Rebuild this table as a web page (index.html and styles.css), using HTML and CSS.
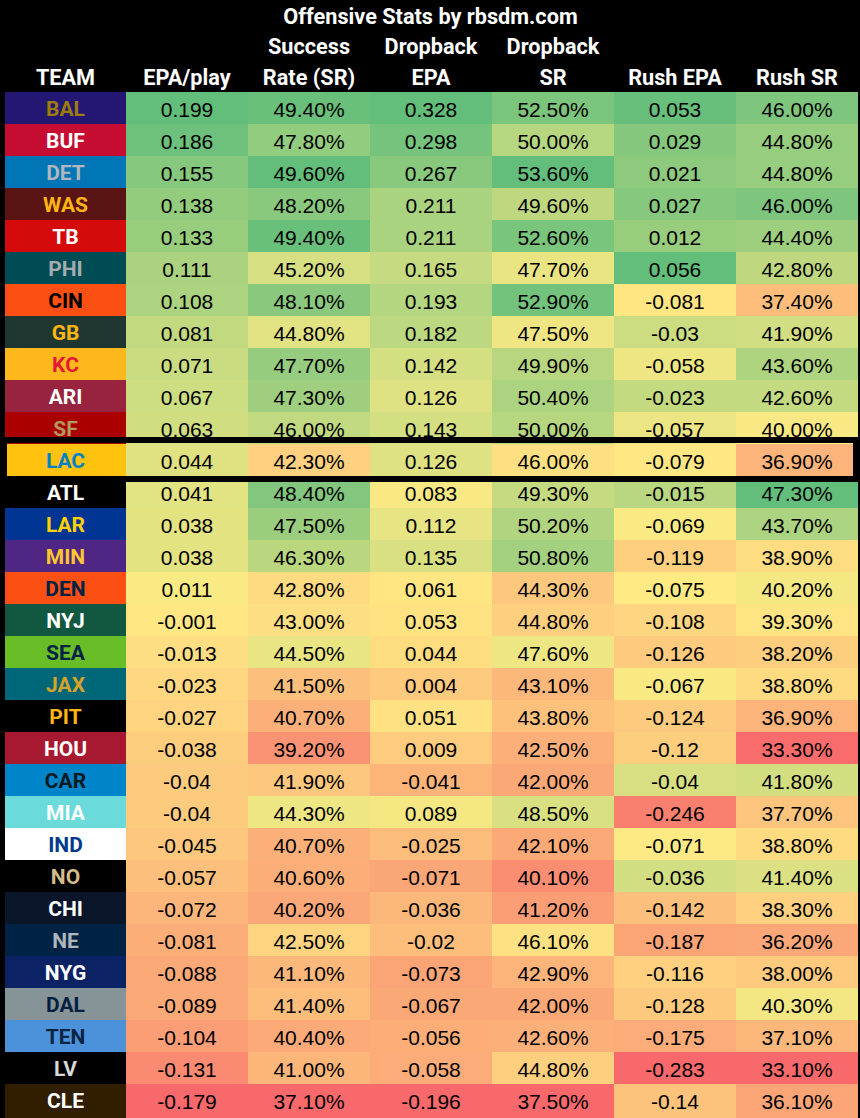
FILE: index.html
```html
<!DOCTYPE html>
<html lang="en">
<head>
<meta charset="utf-8">
<title>Offensive Stats by rbsdm.com</title>
<link rel="stylesheet" href="styles.css">
</head>
<body>
<div class="sheet">
  <header class="head">
    <div class="title">Offensive Stats by rbsdm.com</div>
    <div class="cols">
      <div class="h">TEAM</div>
      <div class="h">EPA/play</div>
      <div class="h">Success<br>Rate (SR)</div>
      <div class="h">Dropback<br>EPA</div>
      <div class="h">Dropback<br>SR</div>
      <div class="h">Rush EPA</div>
      <div class="h">Rush SR</div>
    </div>
  </header>
  <div class="table" id="tbl">
    <div class="row"><div class="team bal">BAL</div><div class="c">0.199</div><div class="c">49.40%</div><div class="c">0.328</div><div class="c">52.50%</div><div class="c">0.053</div><div class="c">46.00%</div></div>
    <div class="row"><div class="team buf">BUF</div><div class="c">0.186</div><div class="c">47.80%</div><div class="c">0.298</div><div class="c">50.00%</div><div class="c">0.029</div><div class="c">44.80%</div></div>
    <div class="row"><div class="team det">DET</div><div class="c">0.155</div><div class="c">49.60%</div><div class="c">0.267</div><div class="c">53.60%</div><div class="c">0.021</div><div class="c">44.80%</div></div>
    <div class="row"><div class="team was">WAS</div><div class="c">0.138</div><div class="c">48.20%</div><div class="c">0.211</div><div class="c">49.60%</div><div class="c">0.027</div><div class="c">46.00%</div></div>
    <div class="row"><div class="team tb">TB</div><div class="c">0.133</div><div class="c">49.40%</div><div class="c">0.211</div><div class="c">52.60%</div><div class="c">0.012</div><div class="c">44.40%</div></div>
    <div class="row"><div class="team phi">PHI</div><div class="c">0.111</div><div class="c">45.20%</div><div class="c">0.165</div><div class="c">47.70%</div><div class="c">0.056</div><div class="c">42.80%</div></div>
    <div class="row"><div class="team cin">CIN</div><div class="c">0.108</div><div class="c">48.10%</div><div class="c">0.193</div><div class="c">52.90%</div><div class="c">-0.081</div><div class="c">37.40%</div></div>
    <div class="row"><div class="team gb">GB</div><div class="c">0.081</div><div class="c">44.80%</div><div class="c">0.182</div><div class="c">47.50%</div><div class="c">-0.03</div><div class="c">41.90%</div></div>
    <div class="row"><div class="team kc">KC</div><div class="c">0.071</div><div class="c">47.70%</div><div class="c">0.142</div><div class="c">49.90%</div><div class="c">-0.058</div><div class="c">43.60%</div></div>
    <div class="row"><div class="team ari">ARI</div><div class="c">0.067</div><div class="c">47.30%</div><div class="c">0.126</div><div class="c">50.40%</div><div class="c">-0.023</div><div class="c">42.60%</div></div>
    <div class="row"><div class="team sf">SF</div><div class="c">0.063</div><div class="c">46.00%</div><div class="c">0.143</div><div class="c">50.00%</div><div class="c">-0.057</div><div class="c">40.00%</div></div>
    <div class="row hl-row"><div class="team lac">LAC</div><div class="c">0.044</div><div class="c">42.30%</div><div class="c">0.126</div><div class="c">46.00%</div><div class="c">-0.079</div><div class="c">36.90%</div><div class="hl"></div></div>
    <div class="row"><div class="team atl">ATL</div><div class="c">0.041</div><div class="c">48.40%</div><div class="c">0.083</div><div class="c">49.30%</div><div class="c">-0.015</div><div class="c">47.30%</div></div>
    <div class="row"><div class="team lar">LAR</div><div class="c">0.038</div><div class="c">47.50%</div><div class="c">0.112</div><div class="c">50.20%</div><div class="c">-0.069</div><div class="c">43.70%</div></div>
    <div class="row"><div class="team min">MIN</div><div class="c">0.038</div><div class="c">46.30%</div><div class="c">0.135</div><div class="c">50.80%</div><div class="c">-0.119</div><div class="c">38.90%</div></div>
    <div class="row"><div class="team den">DEN</div><div class="c">0.011</div><div class="c">42.80%</div><div class="c">0.061</div><div class="c">44.30%</div><div class="c">-0.075</div><div class="c">40.20%</div></div>
    <div class="row"><div class="team nyj">NYJ</div><div class="c">-0.001</div><div class="c">43.00%</div><div class="c">0.053</div><div class="c">44.80%</div><div class="c">-0.108</div><div class="c">39.30%</div></div>
    <div class="row"><div class="team sea">SEA</div><div class="c">-0.013</div><div class="c">44.50%</div><div class="c">0.044</div><div class="c">47.60%</div><div class="c">-0.126</div><div class="c">38.20%</div></div>
    <div class="row"><div class="team jax">JAX</div><div class="c">-0.023</div><div class="c">41.50%</div><div class="c">0.004</div><div class="c">43.10%</div><div class="c">-0.067</div><div class="c">38.80%</div></div>
    <div class="row"><div class="team pit">PIT</div><div class="c">-0.027</div><div class="c">40.70%</div><div class="c">0.051</div><div class="c">43.80%</div><div class="c">-0.124</div><div class="c">36.90%</div></div>
    <div class="row"><div class="team hou">HOU</div><div class="c">-0.038</div><div class="c">39.20%</div><div class="c">0.009</div><div class="c">42.50%</div><div class="c">-0.12</div><div class="c">33.30%</div></div>
    <div class="row"><div class="team car">CAR</div><div class="c">-0.04</div><div class="c">41.90%</div><div class="c">-0.041</div><div class="c">42.00%</div><div class="c">-0.04</div><div class="c">41.80%</div></div>
    <div class="row"><div class="team mia">MIA</div><div class="c">-0.04</div><div class="c">44.30%</div><div class="c">0.089</div><div class="c">48.50%</div><div class="c">-0.246</div><div class="c">37.70%</div></div>
    <div class="row"><div class="team ind">IND</div><div class="c">-0.045</div><div class="c">40.70%</div><div class="c">-0.025</div><div class="c">42.10%</div><div class="c">-0.071</div><div class="c">38.80%</div></div>
    <div class="row"><div class="team no">NO</div><div class="c">-0.057</div><div class="c">40.60%</div><div class="c">-0.071</div><div class="c">40.10%</div><div class="c">-0.036</div><div class="c">41.40%</div></div>
    <div class="row"><div class="team chi">CHI</div><div class="c">-0.072</div><div class="c">40.20%</div><div class="c">-0.036</div><div class="c">41.20%</div><div class="c">-0.142</div><div class="c">38.30%</div></div>
    <div class="row"><div class="team ne">NE</div><div class="c">-0.081</div><div class="c">42.50%</div><div class="c">-0.02</div><div class="c">46.10%</div><div class="c">-0.187</div><div class="c">36.20%</div></div>
    <div class="row"><div class="team nyg">NYG</div><div class="c">-0.088</div><div class="c">41.10%</div><div class="c">-0.073</div><div class="c">42.90%</div><div class="c">-0.116</div><div class="c">38.00%</div></div>
    <div class="row"><div class="team dal">DAL</div><div class="c">-0.089</div><div class="c">41.40%</div><div class="c">-0.067</div><div class="c">42.00%</div><div class="c">-0.128</div><div class="c">40.30%</div></div>
    <div class="row"><div class="team ten">TEN</div><div class="c">-0.104</div><div class="c">40.40%</div><div class="c">-0.056</div><div class="c">42.60%</div><div class="c">-0.175</div><div class="c">37.10%</div></div>
    <div class="row"><div class="team lv">LV</div><div class="c">-0.131</div><div class="c">41.00%</div><div class="c">-0.058</div><div class="c">44.80%</div><div class="c">-0.283</div><div class="c">33.10%</div></div>
    <div class="row"><div class="team cle">CLE</div><div class="c">-0.179</div><div class="c">37.10%</div><div class="c">-0.196</div><div class="c">37.50%</div><div class="c">-0.14</div><div class="c">36.10%</div></div>
  </div>
</div>
<script src="script.js"></script>
</body>
</html>
```

FILE: styles.css
```css
html, body {
  margin: 0;
  padding: 0;
  background: #000;
}
.sheet {
  width: 860px;
  height: 1118px;
  box-sizing: border-box;
  background: #000;
  padding: 0 2px 2px 5px;
  overflow: hidden;
}
.head {
  height: 92px;
  color: #fff;
  font-family: Roboto, "Liberation Sans", sans-serif;
  font-weight: 700;
  font-size: 21.7px;
}
.title {
  height: 32px;
  line-height: 34px;
  text-align: center;
  padding-right: 2px;
}
.cols {
  display: grid;
  grid-template-columns: 121px repeat(6, 122px);
  height: 60px;
  align-items: end;
}
.h {
  text-align: center;
  line-height: 30.5px;
}
.table {
  display: flex;
  flex-direction: column;
}
.row {
  display: grid;
  grid-template-columns: 121px repeat(6, 122px);
  height: 32px;
}
.row > div {
  line-height: 35px;
  text-align: center;
}
.c {
  font-family: "Liberation Sans", Arial, sans-serif;
  font-size: 21px;
  color: #000;
  background: #ffeb84;
}
.team {
  font-family: Roboto, "Liberation Sans", sans-serif;
  font-weight: 700;
  font-size: 21px;
}
.hl-row {
  position: relative;
}
.row > .hl {
  position: absolute;
  top: -7px;
  left: -5px;
  right: -2px;
  bottom: -6px;
  border-style: solid;
  border-color: #000;
  border-width: 6px 7px;
  pointer-events: none;
}
.bal { background: #241773; color: #9e7c0c; }
.buf { background: #c60c30; color: #fff; }
.det { background: #0076b6; color: #b0b7bc; }
.was { background: #5a1414; color: #ffb612; }
.tb  { background: #d50a0a; color: #fff; }
.phi { background: #004c54; color: #a5acaf; }
.cin { background: #fb4f14; color: #000; }
.gb  { background: #203731; color: #ffb612; }
.kc  { background: #ffb81c; color: #e31837; }
.ari { background: #97233f; color: #fff; }
.sf  { background: #aa0000; color: #b3995d; }
.lac { background: #ffc20e; color: #0080c6; }
.atl { background: #000; color: #fff; }
.lar { background: #003594; color: #ffd100; }
.min { background: #4f2683; color: #ffc62f; }
.den { background: #fb4f14; color: #002244; }
.nyj { background: #125740; color: #fff; }
.sea { background: #69be28; color: #002244; }
.jax { background: #006778; color: #d7a22a; }
.pit { background: #000; color: #ffb612; }
.hou { background: #a71930; color: #fff; }
.car { background: #0085ca; color: #101820; }
.mia { background: #6adada; color: #fff; }
.ind { background: #fff; color: #003a8c; }
.no  { background: #000; color: #d3bc8d; }
.chi { background: #0b162a; color: #fff; }
.ne  { background: #002244; color: #b0b7bc; }
.nyg { background: #0b2265; color: #fff; }
.dal { background: #869397; color: #041e42; }
.ten { background: #4b92db; color: #0c2340; }
.lv  { background: #000; color: #d8d8d8; }
.cle { background: #311d00; color: #fff; }
```

FILE: script.js
```js
(function () {
  var rows = Array.prototype.slice.call(document.querySelectorAll('#tbl .row'));
  var RED = [248, 105, 107], YEL = [255, 235, 132], GRN = [99, 190, 123];
  function mix(a, b, t) {
    return 'rgb(' + [0, 1, 2].map(function (i) {
      return Math.round(a[i] + (b[i] - a[i]) * t);
    }).join(',') + ')';
  }
  for (var col = 0; col < 6; col++) {
    var cells = rows.map(function (r) { return r.querySelectorAll('.c')[col]; });
    var vals = cells.map(function (c) { return parseFloat(c.textContent.replace('%', '')); });
    var sorted = vals.slice().sort(function (a, b) { return a - b; });
    var n = sorted.length;
    var pos = (n - 1) * 0.5, lo = Math.floor(pos), hi = Math.ceil(pos);
    var mid = sorted[lo] + (sorted[hi] - sorted[lo]) * (pos - lo);
    var mn = sorted[0], mx = sorted[n - 1];
    cells.forEach(function (c, i) {
      var v = vals[i];
      var bg;
      if (v <= mid) {
        bg = mix(RED, YEL, mid === mn ? 1 : (v - mn) / (mid - mn));
      } else {
        bg = mix(YEL, GRN, mx === mid ? 1 : (v - mid) / (mx - mid));
      }
      c.style.backgroundColor = bg;
    });
  }
})();
```
